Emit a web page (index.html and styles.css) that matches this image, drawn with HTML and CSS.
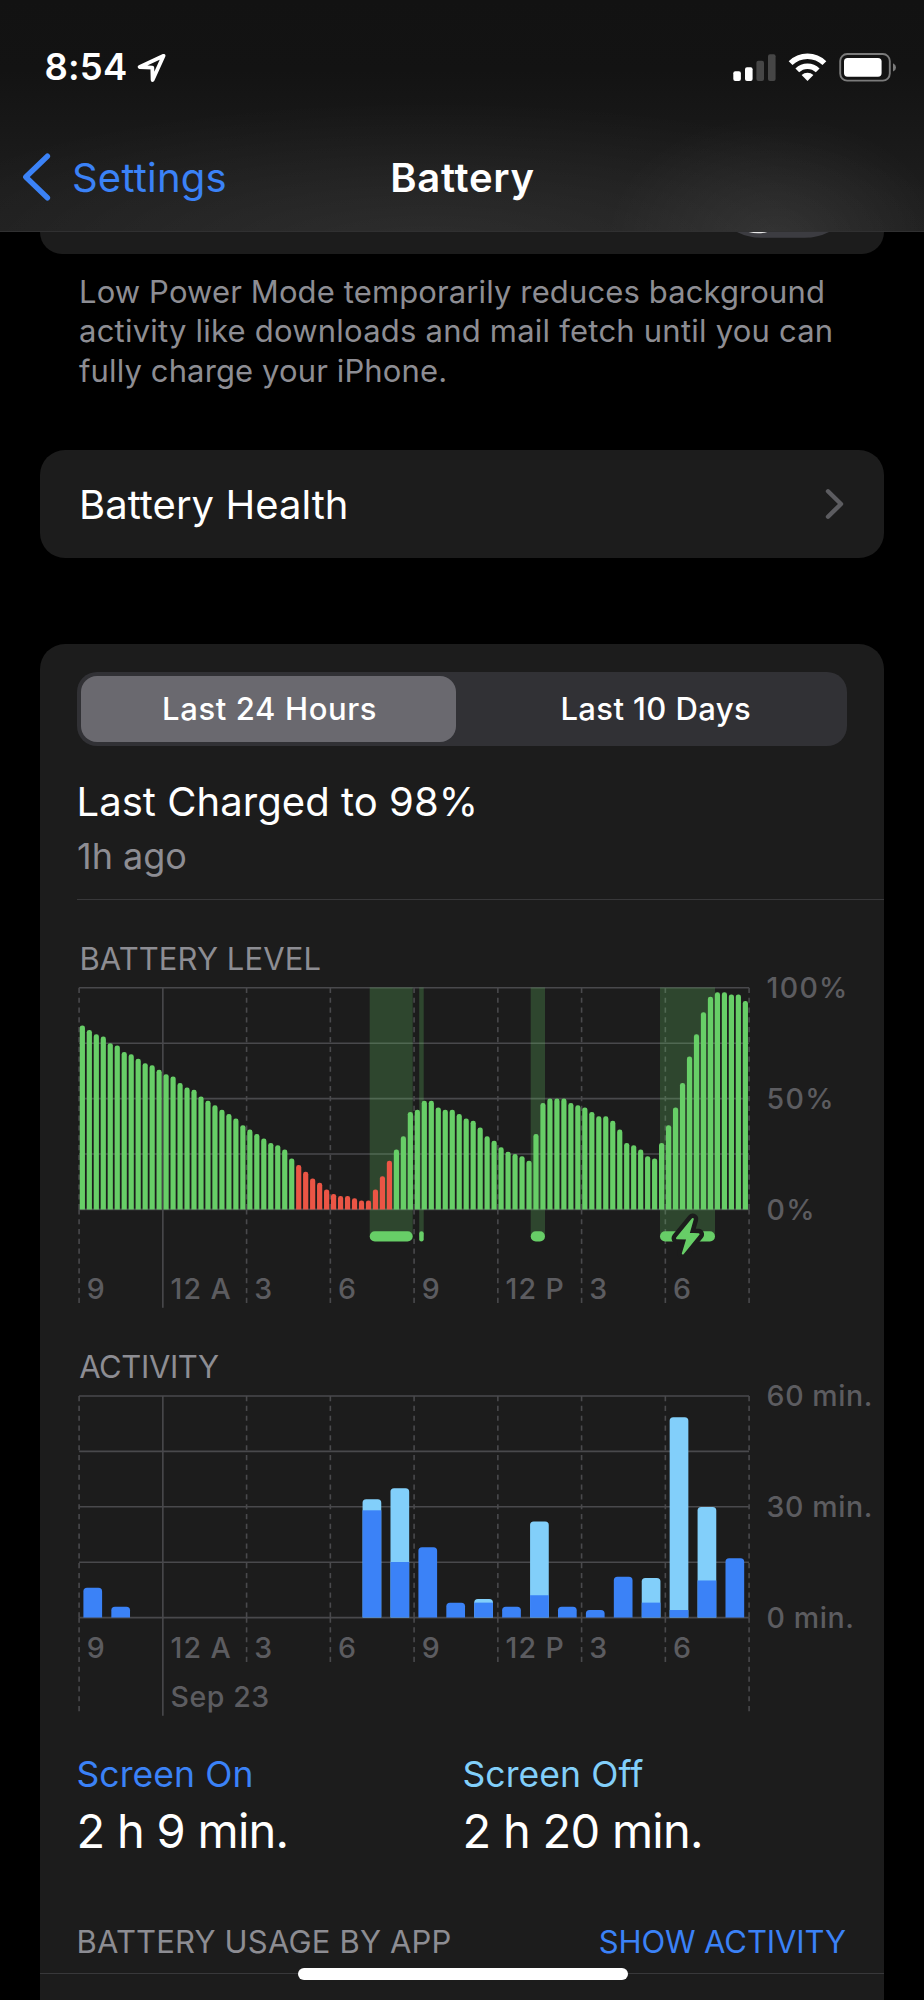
FILE: index.html
```html
<!DOCTYPE html>
<html lang="en">
<head>
<meta charset="utf-8">
<title>Battery</title>
<link rel="stylesheet" href="styles.css">
</head>
<body>
<header class="top">
  <div class="status">
    <span class="clock">8:54</span>
    <svg class="loc" viewBox="137 53 30 30" width="30" height="30"><path d="M163.6 55.8 139.6 67 152.3 67.6 152.6 80Z"/></svg>
    <svg class="signals" viewBox="733 52 164 31" width="164" height="31">
      <rect x="733.3" y="71.3" width="7.6" height="9.6" rx="2" fill="#fff"/>
      <rect x="745" y="67.2" width="7.6" height="13.7" rx="2" fill="#fff"/>
      <rect x="756.4" y="60.8" width="7.6" height="20.1" rx="2" fill="#464646"/>
      <rect x="768" y="54.2" width="7.6" height="26.7" rx="2" fill="#464646"/>
      <g fill="none" stroke="#fff" stroke-width="5.4">
        <path d="M790.6 63.2a24 24 0 0 1 33.8 0"/>
        <path d="M797.3 70.4a14.6 14.6 0 0 1 20.4 0"/>
      </g>
      <path d="M807.5 81 801.6 75.1a8.8 8.8 0 0 1 11.8 0Z" fill="#fff"/>
      <rect x="840.2" y="54" width="49.6" height="26.6" rx="7" fill="none" stroke="#7b7b7b" stroke-width="1.9"/>
      <rect x="844" y="58" width="37.6" height="18.7" rx="3.6" fill="#fff"/>
      <path d="M893 63.2q3 1.4 3 4.2t-3 4.2Z" fill="#7b7b7b"/>
    </svg>
  </div>
  <nav class="nav">
    <a class="back"><svg viewBox="22 153 29 48" width="29" height="48"><path d="M47.4 156.2 25.8 177 47.4 197.8"/></svg><span class="back-label">Settings</span></a>
    <h1 class="title">Battery</h1>
  </nav>
</header>
<main class="page">
  <section class="card power"><svg viewBox="730 232 104 8" width="104" height="8"><path d="M736 231.5q12 6.3 25 6.3h44q13 0 25-6.3Z" fill="#3c3c41"/><path d="M747 231.5q11 3.6 22 0Z" fill="#e8e8e8"/></svg></section>
  <p class="note">Low Power Mode temporarily reduces background<br><span class="wide">activity like downloads and mail fetch until you can</span><br>fully charge your iPhone.</p>
  <section class="card health"><span class="health-label">Battery Health</span><svg viewBox="825 488 21 32" width="21" height="32"><path d="M829 491.3 842 504 829 516.7"/></svg></section>
  <section class="card usage">
    <div class="segmented"><div class="seg seg-on">Last 24 Hours</div><div class="seg">Last 10 Days</div></div>
    <div class="charged"><span class="charged-title">Last Charged to 98%</span><span class="ago">1h ago</span></div>
    <svg class="chart" id="level" viewBox="40 900 844 430" width="844" height="430"></svg>
    <svg class="chart" id="activity" viewBox="40 1330 844 410" width="844" height="410"></svg>
    <div class="totals">
      <div class="total"><span class="on">Screen On</span><span class="value">2 h 9 min.</span></div>
      <div class="total"><span class="off">Screen Off</span><span class="value">2 h 20 min.</span></div>
    </div>
    <div class="apps"><span class="by-app">BATTERY USAGE BY APP</span><a class="show">SHOW ACTIVITY</a></div>
  </section>
</main>
<div class="home"></div>
<script src="script.js"></script>
</body>
</html>
```
FILE: styles.css
```css
* { box-sizing: border-box; }
body { margin: 0; width: 924px; height: 2000px; overflow: hidden; position: relative; background: #000; color: #fff; font-family: Inter, "Liberation Sans", sans-serif; }
span, h1, a { white-space: nowrap; }
svg { display: block; flex: none; }
.top { height: 232px; border-bottom: 1px solid #303031;
  background:
    radial-gradient(ellipse 170px 125px at 775px 240px, rgba(255,255,255,.07), rgba(255,255,255,0)),
    radial-gradient(ellipse 560px 150px at 430px 250px, rgba(255,255,255,.065), rgba(255,255,255,0)),
    linear-gradient(#121212 0, #131313 70px, #1d1d1d 190px, #1f1f1f); }
.status { height: 122px; padding: 32px 27px 0 44.5px; display: flex; align-items: flex-start; }
.clock { font-size: 36.5px; font-weight: 600; line-height: 70px; width: 92.5px; letter-spacing: .18px; }
.loc { margin-top: 21px; fill: none; stroke: #fff; stroke-width: 3.8; stroke-linejoin: round; }
.signals { margin: 20px 0 0 auto; }
.nav { height: 110px; display: grid; grid-template-columns: 1fr auto 1fr; align-items: start; padding: 0 21px 0 22px; }
.back { display: flex; color: #3b82f7; padding-top: 31px; }
.back path { fill: none; stroke: #3b82f7; stroke-width: 5.4; stroke-linecap: round; stroke-linejoin: round; }
.back-label { font-size: 40px; line-height: 50px; margin-left: 21px; letter-spacing: .21px; }
.title { margin: 31px 0 0; font-size: 40px; font-weight: 600; line-height: 50px; letter-spacing: .7px; }
.page { padding: 0 40px 0 39.5px; }
.card { background: #1c1c1c; border-radius: 25px; }
.power { height: 21.5px; border-radius: 0 0 25px 25px; padding-left: 690.5px; }
.note { margin: 0; padding: 18.4px 0 0 39.5px; height: 196.5px; color: #8d8d93; font-size: 31px; line-height: 39.4px; letter-spacing: .12px; white-space: nowrap; }
.wide { letter-spacing: .22px; }
.health { height: 108px; padding: 0 39.5px 0 39.5px; display: flex; align-items: center; justify-content: space-between; }
.health-label { font-size: 40px; line-height: 50px; padding-top: 2px; letter-spacing: .03px; }
.health path { fill: none; stroke: #5c5c60; stroke-width: 4.4; stroke-linecap: round; stroke-linejoin: round; }
.usage { margin-top: 86px; height: 1400px; padding-top: 28px; }
.segmented { margin: 0 37px 0 37.5px; height: 74px; border-radius: 20px; background: #313135; padding: 4.4px; display: grid; grid-template-columns: 374.5px 1fr; }
.seg { display: flex; align-items: center; justify-content: center; font-size: 31px; font-weight: 500; border-radius: 16px; letter-spacing: .4px; padding: 0 0 2px 13px; }
.seg-on { background: #6a696f; letter-spacing: .62px; padding-left: 2px; }
.charged { height: 154px; margin-left: 37.5px; border-bottom: 1.5px solid #38383a; display: flex; flex-direction: column; padding-top: 31px; }
.charged-title { font-size: 40px; line-height: 50px; letter-spacing: .05px; margin-left: -.5px; }
.ago { font-size: 36px; line-height: 50px; color: #8d8d93; margin-top: 4px; }
.chart { margin-left: .5px; }
.grid { stroke: #49494c; stroke-width: 1.6; }
.dash { stroke-dasharray: 5.2 4.63; }
.chart text { font-size: 28.5px; font-weight: 500; fill: #5c5c60; letter-spacing: .6px; }
.chart .h2 { letter-spacing: 1px; }
.chart .pct { letter-spacing: 1.3px; }
.chart .heading { font-size: 31px; font-weight: 400; fill: #8d8d93; letter-spacing: .1px; }
.chart .tight { letter-spacing: -.4px; }
.green { fill: #67ce67; } .red { fill: #eb5545; } .blue { fill: #3b82f7; } .sky { fill: #82cffa; }
.band { fill: #67ce67; fill-opacity: .24; }
.bolt { fill: #67ce67; stroke: #67ce67; stroke-width: 2; stroke-linejoin: round; }
.bolt-edge { fill: #1c1c1c; stroke: #1c1c1c; stroke-width: 11; stroke-linejoin: round; }
.totals { display: grid; grid-template-columns: 386px 1fr; padding: 10px 0 0 37px; height: 161px; }
.total { display: flex; flex-direction: column; }
.on, .off { font-size: 35.5px; line-height: 50px; color: #3b82f7; letter-spacing: .07px; }
.off { color: #82cffa; }
.value { font-size: 47px; line-height: 61px; letter-spacing: -.72px; }
.apps { height: 73px; padding: 16px 38px 0 37px; display: flex; justify-content: space-between; border-bottom: 1.5px solid #38383a; font-size: 31px; line-height: 50px; color: #8d8d93; }
.by-app { letter-spacing: .18px; }
.show { color: #3b82f7; letter-spacing: -.1px; }
.home { position: absolute; left: 297.5px; top: 1968px; width: 330px; height: 12.3px; border-radius: 7px; background: #fff; }
```
FILE: script.js
```js
const NS = 'http://www.w3.org/2000/svg';
const LEFT = 79.1, RIGHT = 749, STEP = 83.75;
const hours = ['9', '12 A', '3', '6', '9', '12 P', '3', '6'];

function add(svg, tag, attrs, text) {
  const el = document.createElementNS(NS, tag);
  for (const k in attrs) el.setAttribute(k, attrs[k]);
  if (text) el.textContent = text;
  svg.appendChild(el);
}

function frame(svg, o) {
  add(svg, 'text', { x: o.hx, y: o.top - 17.8, class: o.headingClass }, o.heading);
  for (let i = 0; i < 5; i++) {
    const y = o.top + i * 55.4;
    add(svg, 'line', { x1: LEFT, x2: RIGHT, y1: y, y2: y, class: 'grid' });
  }
  const axis = o.top + 221.5;
  for (let i = 0; i < 9; i++) {
    const x = LEFT + i * STEP;
    const end = i === 1 ? o.solidEnd : (i === 0 || i === 8) ? o.edgeEnd : o.dashEnd;
    const cls = i === 1 ? 'grid' : 'grid dash';
    add(svg, 'line', { x1: x, x2: x, y1: o.top, y2: axis, class: cls });
    add(svg, 'line', { x1: x, x2: x, y1: axis, y2: end, class: cls });
    if (i < 8) add(svg, 'text', { x: x + 7.7, y: o.labelY, class: hours[i].length > 1 ? 'h2' : '' }, hours[i]);
  }
  o.scale.forEach((t, i) => add(svg, 'text', { x: 766.6, y: o.top + 10.1 + i * 110.8, class: o.scaleClass }, t));
}

function topRounded(x, y, w, h, r) {
  r = Math.min(r, h);
  return `M${x} ${y + h}V${y + r}q0-${r} ${r}-${r}h${w - 2 * r}q${r} 0 ${r} ${r}V${y + h}Z`;
}

const level = document.getElementById('level');
frame(level, { top: 987.8, hx: 79.4, heading: 'BATTERY LEVEL', headingClass: 'heading', solidEnd: 1307.7, edgeEnd: 1303, dashEnd: 1303, labelY: 1299, scale: ['100%', '50%', '0%'], scaleClass: 'pct' });
const bands = [[369.7, 43], [419.2, 4.5], [530.7, 14.3], [660, 55]];
for (const [x, w] of bands) add(level, 'rect', { x, y: 987.5, width: w, height: 249, class: 'band' });
const charge = [83,81,79,78,75,74,71,70,68,66,65,63,61,60,57,55,54,51,49,47,45,43,41,38,36,34,32,30,29,27,23,20,17,14,12,9,7,6,6,5,4,4,9,15,22,27,33,44,45,49,49,46,45,45,43,41,40,37,33,31,28,26,25,24,22,34,48,50,50,50,48,47,46,44,42,42,40,36,30,29,27,24,23,30,38,46,57,69,79,89,96,98,98,97,97,94];
charge.forEach((v, i) => {
  const h = v * 2.216;
  add(level, 'path', { d: topRounded(79.75 + i * 6.979, 1209.4 - h, 5.2, h, 2.4), class: i > 30 && i < 45 ? 'red' : 'green' });
});
for (const [x, w] of bands) add(level, 'rect', { x, y: 1231.3, width: w, height: 10.3, rx: Math.min(5.1, w / 2), class: 'green' });
const bolt = 'M692.8 1219 677 1238.2 687.4 1238.6 682.8 1253.6 698.6 1234.2 688.6 1233.8Z';
add(level, 'path', { d: bolt, class: 'bolt-edge' });
add(level, 'path', { d: bolt, class: 'bolt' });

const activity = document.getElementById('activity');
frame(activity, { top: 1396, hx: 79.2, heading: 'ACTIVITY', headingClass: 'heading tight', solidEnd: 1715.8, edgeEnd: 1711.2, dashEnd: 1662, labelY: 1658, scale: ['60 min.', '30 min.', '0 min.'], scaleClass: 'min' });
add(activity, 'text', { x: 170.4, y: 1706.8, class: 'date' }, 'Sep 23');
const usage = { 0: [8, 8], 1: [2.9, 2.9], 10: [29, 32], 11: [15, 35], 12: [19, 19], 13: [4, 4], 14: [4, 5], 15: [2.9, 2.9], 16: [6, 26], 17: [2.9, 2.9], 18: [2, 2], 19: [11, 11], 20: [4, 10.7], 21: [2, 54.2], 22: [10, 29.9], 23: [16, 16] };
for (const i in usage) {
  const [on, all] = usage[i], x = 83.4 + i * 27.917, w = 18.7;
  const y = 1617.4 - all * 3.693, h = on * 3.693;
  add(activity, 'path', { d: topRounded(x, y, w, all * 3.693, 3.6), class: all > on ? 'sky' : 'blue' });
  if (all > on) add(activity, 'rect', { x, y: 1617.4 - h, width: w, height: h, class: 'blue' });
}
```
